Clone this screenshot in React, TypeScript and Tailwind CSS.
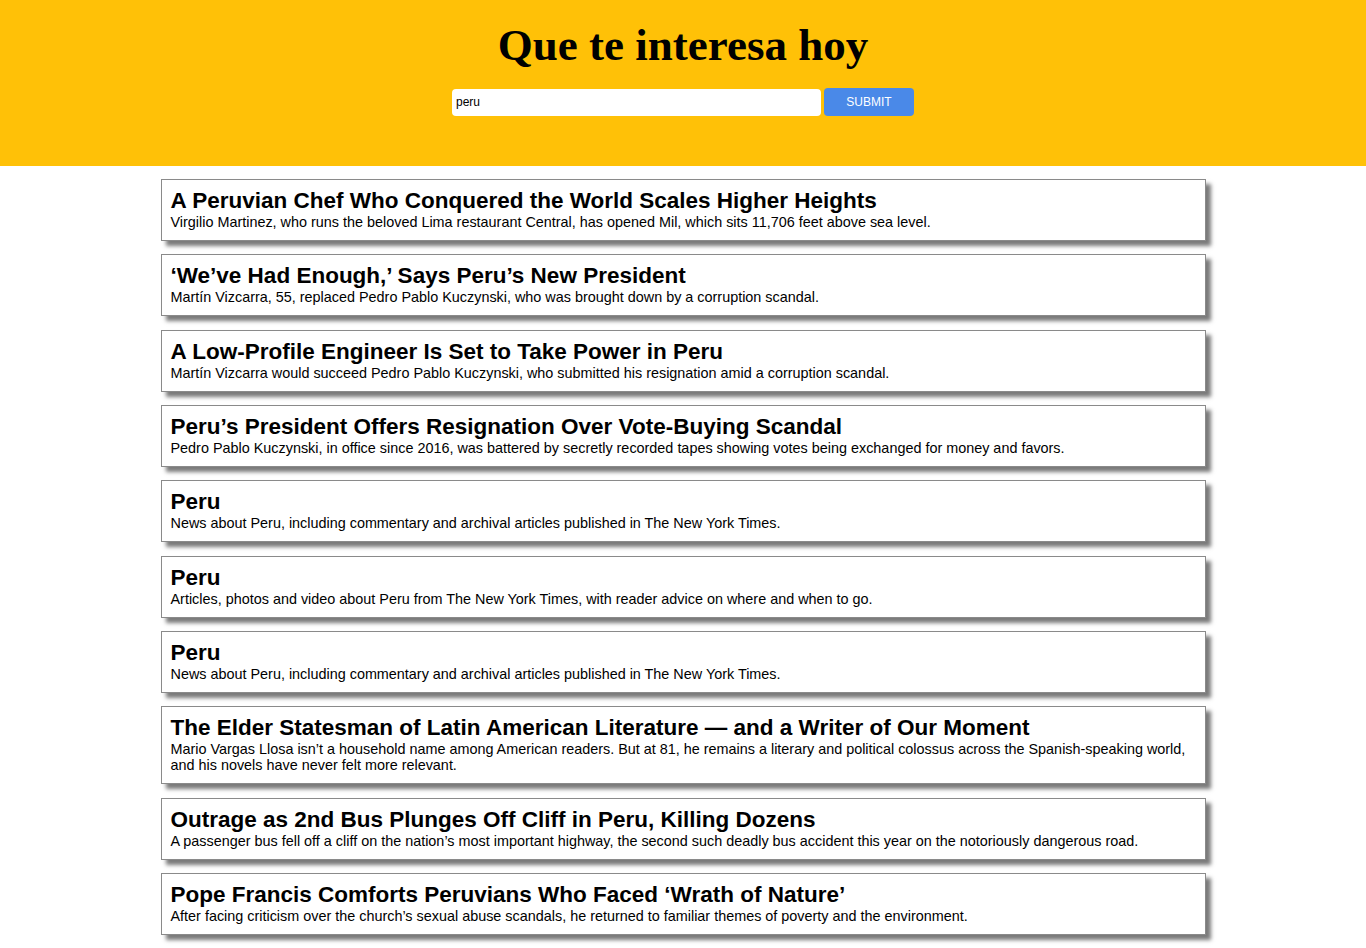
import { useState } from "react";

const articles = [
  {
    title: "A Peruvian Chef Who Conquered the World Scales Higher Heights",
    text: "Virgilio Martinez, who runs the beloved Lima restaurant Central, has opened Mil, which sits 11,706 feet above sea level.",
  },
  {
    title: "‘We’ve Had Enough,’ Says Peru’s New President",
    text: "Martín Vizcarra, 55, replaced Pedro Pablo Kuczynski, who was brought down by a corruption scandal.",
  },
  {
    title: "A Low-Profile Engineer Is Set to Take Power in Peru",
    text: "Martín Vizcarra would succeed Pedro Pablo Kuczynski, who submitted his resignation amid a corruption scandal.",
  },
  {
    title: "Peru’s President Offers Resignation Over Vote-Buying Scandal",
    text: "Pedro Pablo Kuczynski, in office since 2016, was battered by secretly recorded tapes showing votes being exchanged for money and favors.",
  },
  {
    title: "Peru",
    text: "News about Peru, including commentary and archival articles published in The New York Times.",
  },
  {
    title: "Peru",
    text: "Articles, photos and video about Peru from The New York Times, with reader advice on where and when to go.",
  },
  {
    title: "Peru",
    text: "News about Peru, including commentary and archival articles published in The New York Times.",
  },
  {
    title: "The Elder Statesman of Latin American Literature — and a Writer of Our Moment",
    text: "Mario Vargas Llosa isn’t a household name among American readers. But at 81, he remains a literary and political colossus across the Spanish-speaking world, and his novels have never felt more relevant.",
  },
  {
    title: "Outrage as 2nd Bus Plunges Off Cliff in Peru, Killing Dozens",
    text: "A passenger bus fell off a cliff on the nation’s most important highway, the second such deadly bus accident this year on the notoriously dangerous road.",
  },
  {
    title: "Pope Francis Comforts Peruvians Who Faced ‘Wrath of Nature’",
    text: "After facing criticism over the church’s sexual abuse scandals, he returned to familiar themes of poverty and the environment.",
  },
];

export default function App() {
  const [query, setQuery] = useState("peru");

  return (
    <div className="min-h-screen bg-white font-['Liberation_Sans',Arial,sans-serif] text-black">
      <header className="bg-[#ffc107] h-[166px] flex flex-col items-center pt-[18px]">
        <h1 className="font-['Liberation_Serif','Times_New_Roman',serif] font-bold text-[45px] leading-[54px]">
          Que te interesa hoy
        </h1>
        <form
          className="flex items-center gap-[3px] mt-[16px]"
          onSubmit={(e) => e.preventDefault()}
        >
          <input
            value={query}
            onChange={(e) => setQuery(e.target.value)}
            className="w-[369px] h-[27px] bg-white rounded-[4px] px-[4px] text-[12px] text-black outline-none"
          />
          <button
            type="submit"
            className="w-[90px] h-[28px] bg-[#4a89e8] rounded-[4px] text-white text-[12px]"
          >
            SUBMIT
          </button>
        </form>
      </header>

      <main className="w-[1045px] mx-auto pt-[13px] pb-[13px] flex flex-col gap-[13.33px]">
        {articles.map((a, i) => (
          <div
            key={i}
            className="border border-[#8a8a8a] bg-white pl-[9px] pr-[12px] pt-[8px] pb-[10px] shadow-[5px_5px_4px_#7a7a7a]"
          >
            <h2 className="font-bold text-[22.5px] leading-[26px]">{a.title}</h2>
            <p className="text-[14.4px] leading-[16px]">{a.text}</p>
          </div>
        ))}
      </main>
    </div>
  );
}
